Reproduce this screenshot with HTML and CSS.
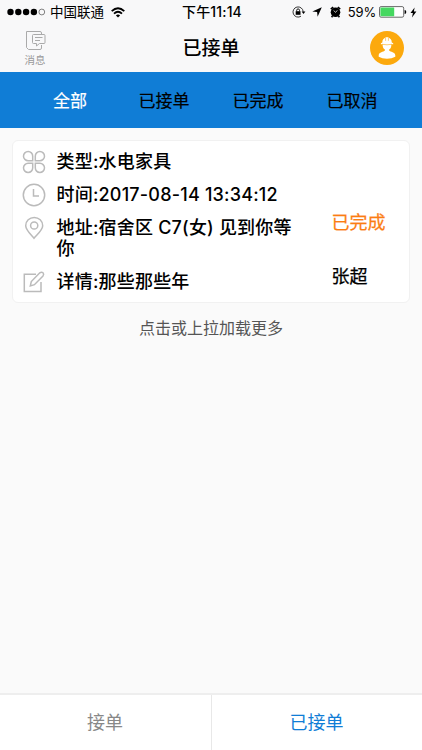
FILE: index.html
```html
<!DOCTYPE html>
<html lang="zh-CN">
<head>
<meta charset="utf-8">
<title>已接单</title>
<link rel="stylesheet" href="styles.css">
</head>
<body>
<div class="app">
  <div class="status">
    <div class="status-left">
      <svg class="signal" width="39" height="8" viewBox="0 0 39 8"><g fill="#000"><circle cx="3.5" cy="4" r="3.2"/><circle cx="11.3" cy="4" r="3.2"/><circle cx="19.1" cy="4" r="3.2"/><circle cx="26.9" cy="4" r="3.2"/></g><circle cx="34.8" cy="4" r="2.9" fill="none" stroke="#333" stroke-width=".6"/></svg>
      <span class="carrier">中国联通</span>
      <svg width="14" height="11" viewBox="0 0 14 11"><g fill="none" stroke="#000" stroke-width="1.8"><path d="M.7 4.1Q7-1.700 13.300 4.100"/><path d="M3 6.600Q7 3 11 6.600"/></g><path d="M4.900 8.400Q7 6.600 9.100 8.400L7 10.600z"/></svg>
    </div>
    <div class="clock">下午11:14</div>
    <div class="status-right">
      <svg width="14" height="12" viewBox="0 0 14 12"><path d="M11.200 5.800A5.100 5.100 0 1 0 9 10.200" fill="none" stroke="#222" stroke-width=".9"/><path d="M9.600 5.400h3.800l-1.900 2.500z"/><rect x="3.700" y="5.200" width="4.800" height="3.600"/><path d="M4.700 5.400V4.300a1.400 1.400 0 0 1 2.800 0v1.100" fill="none" stroke="#000" stroke-width=".9"/></svg>
      <svg class="arrow" width="10" height="10" viewBox="0 0 10 10"><path d="M9.800.2L5.600 9.800 5.100 5 .3 4.500z"/></svg>
      <svg class="alarm" width="11" height="12" viewBox="0 0 11 12"><circle cx="5.500" cy="6.300" r="4.800"/><path d="M.8 3.200L3.200 1.100M7.800 1.100l2.400 2.100M2.500 10L1.600 11.300M8.500 10l.9 1.300" stroke="#000" stroke-width="1.600"/><path d="M3.600 4.500l2 1.900 1.700-2.100" fill="none" stroke="#fff" stroke-width=".7"/></svg>
      <span class="percent">59%</span>
      <svg class="battery" width="28" height="12" viewBox="0 0 28 12"><rect x=".5" y=".6" width="24.200" height="10.600" rx="1.600" fill="#fff" stroke="#444" stroke-width=".8"/><rect x="1.400" y="1.500" width="13.800" height="8.800" rx=".6" fill="#45d860"/><path d="M25.600 4q1.700.2 1.700 2t-1.700 2z"/></svg>
      <svg width="7" height="11" viewBox="0 0 7 11"><path d="M4.600.4L.5 6h2.400L2 10.600 6.400 4.600H3.900z"/></svg>
    </div>
  </div>

  <header class="header">
    <div class="message">
      <svg width="21" height="19" viewBox="0 0 21 19" fill="none" stroke="#aaa" stroke-width="1"><path d="M16.500 3V2Q16.500.5 15 .5H1.500V16.500l2 2H15q1.500 0 1.500-1.500V14"/><path d="M8.500 3.500H19q1 0 1 1v7q0 1-1 1h-4.500L11.500 15v-2.500h-3q-1 0-1-1v-7q0-1 1-1zM10 6.500h7.500M10 9.500h5"/></svg>
      <span>消息</span>
    </div>
    <h1 class="title">已接单</h1>
    <svg class="avatar" width="34" height="34" viewBox="0 0 34 34"><circle cx="17" cy="17" r="17" fill="#fca90d"/><g fill="#fff"><path d="M12.300 11.400c0-2.800 1.500-4.300 3.300-4.700V6.200h2.800v.5c1.800.4 3.400 1.900 3.400 4.700l1.400.9v1H10.900v-1z"/><path d="M12.600 13h8.800q.2 4-2.300 5.600v1c1.400 1.500 5.900 1.400 6.200 4.600v1.600q-3.400 2-8.300 2t-8.300-2v-1.600c.3-3.200 4.800-3.100 6.200-4.600v-1q-2.500-1.600-2.300-5.600z"/></g><path d="M12 13.300q5 1 10 0M15.600 7v2.800M18.400 7v2.800" fill="none" stroke="#fca90d" stroke-width=".6"/></svg>
  </header>

  <nav class="tabs">
    <div class="tab tab-active">全部</div>
    <div class="tab">已接单</div>
    <div class="tab">已完成</div>
    <div class="tab">已取消</div>
  </nav>

  <main class="content">
    <section class="card">
      <div class="details">
        <div class="row">
          <svg class="icon" width="24" height="24" viewBox="0 0 24 24"><path d="M10.700 10.700H6.200A4.600 4.600 0 1 1 10.700 6.200zM13.300 10.700V6.200a4.600 4.600 0 1 1 4.500 4.500zM10.700 13.300v4.500a4.600 4.600 0 1 1-4.500-4.500zM13.300 13.300h4.500a4.600 4.600 0 1 1-4.500 4.500z"/></svg>
          <p class="text">类型:水电家具</p>
        </div>
        <div class="row">
          <svg class="icon" width="24" height="24" viewBox="0 0 24 24"><circle cx="12" cy="12" r="10.700"/><path d="M11.500 6v7H17"/></svg>
          <p class="text">时间:2017-08-14 13:34:12</p>
        </div>
        <div class="row">
          <svg class="icon" width="24" height="24" viewBox="0 0 24 24"><path d="M12 22.300C8.500 18.200 3.700 13.700 3.700 9.700a8.500 8.300 0 0 1 17 0c0 4-5.200 8.500-8.700 12.600z"/><circle cx="12.200" cy="9.500" r="3.600"/></svg>
          <p class="text">地址:宿舍区 C7(女) 见到你等你</p>
        </div>
        <div class="row">
          <svg class="icon" width="24" height="24" viewBox="0 0 24 24"><path d="M14 4.200H2.300v17.300H19V12"/><path d="M8.300 15.900l1-4.400 8.500-8.700q1.800-1.300 3.200 0 1.300 1.400 0 3.100l-8.600 8.800z"/></svg>
          <p class="text">详情:那些那些年</p>
        </div>
      </div>
      <div class="result">
        <div class="state">已完成</div>
        <div class="worker">张超</div>
      </div>
    </section>
    <div class="more">点击或上拉加载更多</div>
  </main>

  <footer class="bottom">
    <div class="bottom-item">接单</div>
    <div class="bottom-item bottom-active">已接单</div>
  </footer>
</div>
</body>
</html>
```
FILE: styles.css
```css
* { box-sizing: border-box; }
body {
  margin: 0;
  background: #fafafa;
  color: #000;
  font-family: Inter, "Noto Sans CJK SC", sans-serif;
}
svg { display: block; flex: none; }
.app { height: 750px; display: flex; flex-direction: column; }
.status {
  height: 24px;
  display: grid;
  grid-template-columns: 1fr auto 1fr;
  align-items: center;
  padding: 0 5px 0 7px;
  background: #f8f8f9;
  font-size: 13.5px;
  line-height: 24px;
}
.status-left, .status-right { display: flex; align-items: center; }
.carrier { margin: 0 7px 0 4px; }
.clock { font-size: 14px; font-weight: 500; letter-spacing: .15px; }
.status-right { justify-content: flex-end; }
.arrow { margin-left: 6px; }
.alarm { margin-left: 8px; }
.percent { margin-left: 7px; font-size: 13px; letter-spacing: -.2px; }
.battery { margin: 0 3px; }
.header {
  height: 48px;
  display: grid;
  grid-template-columns: 1fr auto 1fr;
  align-items: center;
  padding: 0 18px;
  background: #f8f8f9;
}
.message { width: 22px; margin-left: 6px; font-size: 10.5px; line-height: 14px; color: #999; display: flex; flex-direction: column; align-items: center; gap: 4px; padding-top: 2px; white-space: nowrap; }
.title { margin: 2px 0 0; font-size: 19px; line-height: 26px; font-weight: 500; }
.avatar { justify-self: end; }
.tabs {
  height: 56px;
  display: grid;
  grid-template-columns: repeat(4, 1fr);
  padding: 1px 23px 0;
  background: #107dd6;
  font-size: 17px;
  line-height: 56px;
  text-align: center;
  -webkit-text-stroke: .2px currentColor;
}
.tab-active { color: #fff; }
.content { flex: 1; padding: 12px 12px 0; }
.card {
  height: 163px;
  display: flex;
  border: 1px solid #f1f1f1;
  border-radius: 6px;
  background: #fff;
  padding: 10px 10px 0;
}
.details { width: 280px; display: flex; flex-direction: column; gap: 12px; }
.row { display: flex; gap: 10.5px; align-items: flex-start; }
.icon { margin: -1px 0 -2px -1px; fill: none; stroke: #bbb; stroke-width: 1.5; }
.text { margin: 0; width: 242px; font-size: 18px; line-height: 21px; font-weight: 500; letter-spacing: .2px; }
.result { padding: 61px 0 0 28.5px; font-size: 18px; line-height: 22px; display: flex; flex-direction: column; gap: 32px; -webkit-text-stroke: .25px currentColor; }
.state { color: #fb7d12; }
.more { margin-top: 14px; text-align: center; font-size: 16px; line-height: 22px; color: #555; }
.bottom {
  height: 57px;
  display: grid;
  grid-template-columns: 1fr 1fr;
  border-top: 2px solid #eee;
  background: #fff;
  font-size: 18px;
  line-height: 55px;
  text-align: center;
  color: #888;
}
.bottom-item { padding-right: 1px; }
.bottom-active { border-left: 1px solid #e8e8e8; color: #107dd6; }
```
